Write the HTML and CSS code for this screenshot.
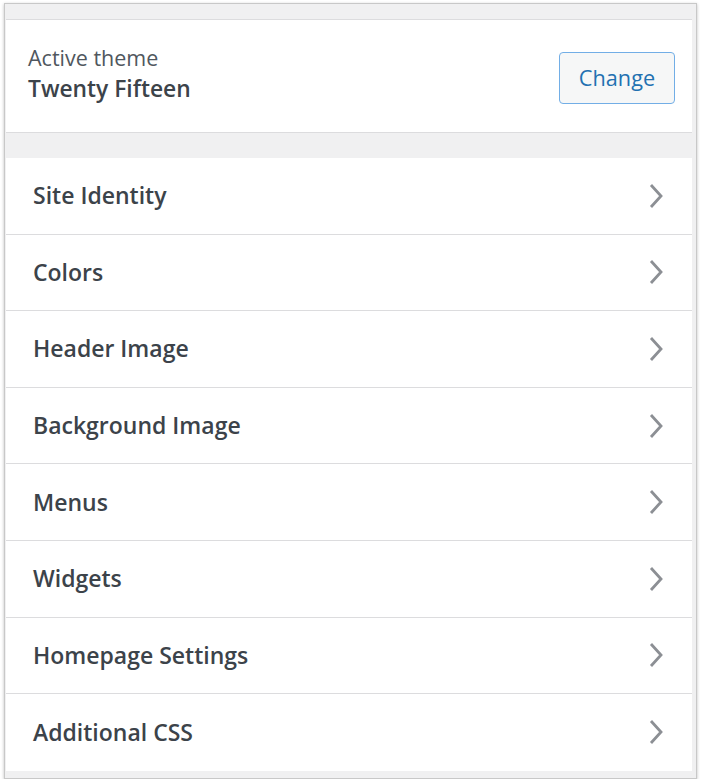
FILE: index.html
```html
<!DOCTYPE html>
<html lang="en">
<head>
<meta charset="utf-8">
<title>Customizer</title>
<link rel="stylesheet" href="styles.css">
</head>
<body>
<div class="frame">
  <div class="panel">
    <div class="top-gap"></div>
    <div class="theme">
      <div class="theme-info">
        <span class="theme-label">Active theme</span>
        <span class="theme-name">Twenty Fifteen</span>
      </div>
      <button class="change-btn" type="button">Change</button>
    </div>
    <div class="mid-gap"></div>
    <ul class="sections">
      <li class="section"><span>Site Identity</span><svg class="chev" viewBox="0 0 14 26"><path d="M2 2 L12 13 L2 24"/></svg></li>
      <li class="section"><span>Colors</span><svg class="chev" viewBox="0 0 14 26"><path d="M2 2 L12 13 L2 24"/></svg></li>
      <li class="section"><span>Header Image</span><svg class="chev" viewBox="0 0 14 26"><path d="M2 2 L12 13 L2 24"/></svg></li>
      <li class="section"><span>Background Image</span><svg class="chev" viewBox="0 0 14 26"><path d="M2 2 L12 13 L2 24"/></svg></li>
      <li class="section"><span>Menus</span><svg class="chev" viewBox="0 0 14 26"><path d="M2 2 L12 13 L2 24"/></svg></li>
      <li class="section"><span>Widgets</span><svg class="chev" viewBox="0 0 14 26"><path d="M2 2 L12 13 L2 24"/></svg></li>
      <li class="section"><span>Homepage Settings</span><svg class="chev" viewBox="0 0 14 26"><path d="M2 2 L12 13 L2 24"/></svg></li>
      <li class="section"><span>Additional CSS</span><svg class="chev" viewBox="0 0 14 26"><path d="M2 2 L12 13 L2 24"/></svg></li>
    </ul>
  </div>
</div>
</body>
</html>
```
FILE: styles.css
```css
* { box-sizing: border-box; }
html, body { margin: 0; padding: 0; background: #ffffff; }
body {
  font-family: "Open Sans", "Noto Sans", "Liberation Sans", sans-serif;
  padding: 3px 5px 0 4px;
}
.frame {
  width: 693px;
  height: 776px;
  border: 1px solid #c8c8c8;
  box-shadow: 0 1px 3px rgba(0,0,0,0.25);
  background: #f0f0f1;
  padding: 0 4px 7px 1px;
  display: flex;
  flex-direction: column;
}
.panel {
  flex: 1;
  display: flex;
  flex-direction: column;
}
.top-gap { height: 15px; }
.theme {
  background: #fff;
  height: 114px;
  border-top: 1px solid #dcdcde;
  border-bottom: 1px solid #dcdcde;
  display: flex;
  align-items: center;
  justify-content: space-between;
  padding: 0 17px 0 22px;
}
.theme-info {
  display: flex;
  flex-direction: column;
  margin-top: -2px;
}
.theme-label {
  font-size: 21.5px;
  color: #50575e;
  line-height: 28px;
}
.theme-name {
  font-size: 22.8px;
  font-weight: 600;
  color: #3c434a;
  line-height: 34px;
}
.change-btn {
  font-family: inherit;
  width: 116px;
  height: 52px;
  border: 1px solid #72aee6;
  border-radius: 4px;
  background: #f6f7f7;
  color: #2271b1;
  font-size: 21.7px;
  margin-top: 3px;
  padding: 0;
}
.mid-gap { height: 25px; }
.sections {
  list-style: none;
  margin: 0;
  padding: 0;
  background: #fff;
}
.section {
  height: 76.6px;
  border-bottom: 1px solid #dcdcde;
  display: flex;
  align-items: center;
  justify-content: space-between;
  padding: 0 29px 0 27px;
  font-size: 23px;
  font-weight: 600;
  color: #3c434a;
}
.section:last-child { border-bottom: none; }
.section span { margin-top: -1px; }
.chev {
  width: 14px;
  height: 26px;
  fill: none;
  stroke: #8c8f94;
  stroke-width: 2.8;
}
```
